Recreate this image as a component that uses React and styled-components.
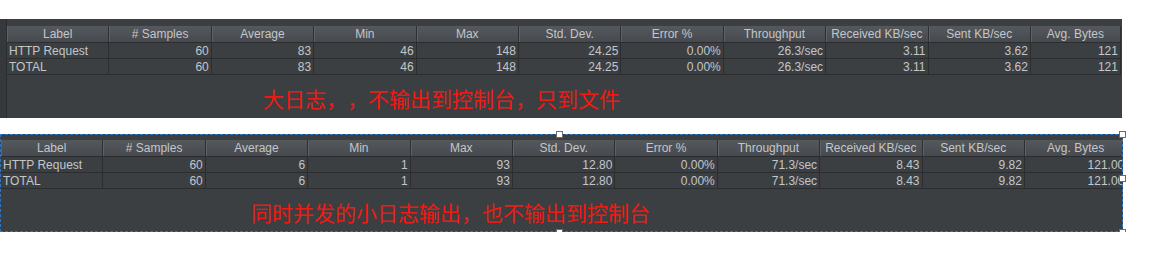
import styled, { createGlobalStyle } from 'styled-components';

const GlobalStyle = createGlobalStyle`
	body {
		margin: 0;
		background: #ffffff;
		font-family: 'Liberation Sans', Arial, sans-serif;
	}
`;

const columns = [
	'Label',
	'# Samples',
	'Average',
	'Min',
	'Max',
	'Std. Dev.',
	'Error %',
	'Throughput',
	'Received KB/sec',
	'Sent KB/sec',
	'Avg. Bytes'
];

const bigLogRows = [
	['HTTP Request', '60', '83', '46', '148', '24.25', '0.00%', '26.3/sec', '3.11', '3.62', '121'],
	['TOTAL', '60', '83', '46', '148', '24.25', '0.00%', '26.3/sec', '3.11', '3.62', '121']
];

const smallLogRows = [
	['HTTP Request', '60', '6', '1', '93', '12.80', '0.00%', '71.3/sec', '8.43', '9.82', '121.00'],
	['TOTAL', '60', '6', '1', '93', '12.80', '0.00%', '71.3/sec', '8.43', '9.82', '121.00']
];

const Page = styled.div`
	padding-top: 19px;
	display: flex;
	flex-direction: column;
	gap: 16px;
`;

const TopPanel = styled.div`
	width: 1122px;
	height: 99px;
	display: flex;
	background: #3c3f42;
	overflow: hidden;
`;

const SideStrip = styled.div`
	width: 6px;
	background: #36393c;
	border-right: 1px solid #2a2c2e;
	flex-shrink: 0;
`;

const PanelBody = styled.div`
	flex: 1;
	display: flex;
	flex-direction: column;
	padding-top: ${(p) => p.$top}px;
	overflow: hidden;
	min-width: 0;
`;

const Grid = styled.div`
	display: grid;
	grid-template-columns: repeat(10, 102.4px) ${(p) => p.$last}px;
	font-size: 12px;
	color: #c3c6ca;
`;

const HeadCell = styled.div`
	height: 17px;
	line-height: 17px;
	text-align: center;
	background: linear-gradient(#55585c, #46494d);
	border-right: 1px solid #2e3033;
	box-shadow: inset 1px 0 0 #5e6165;
	border-bottom: 1px solid #2b2d30;
	box-sizing: border-box;
	white-space: nowrap;
	overflow: hidden;
`;

const Cell = styled.div`
	height: 16px;
	line-height: 16px;
	padding: 0 2px;
	text-align: ${(p) => (p.$left ? 'left' : 'right')};
	background: #3c3f42;
	border-right: 1px solid #2b2d30;
	border-bottom: 1px solid #2b2d30;
	box-sizing: border-box;
	white-space: nowrap;
	overflow: hidden;
`;

const Note = styled.div`
	font-family: 'Noto Sans CJK SC', 'Microsoft YaHei', sans-serif;
	font-size: 21px;
	line-height: 24px;
	color: #f01a12;
	white-space: nowrap;
	text-spacing-trim: space-all;
	padding-left: ${(p) => p.$left}px;
	padding-top: ${(p) => p.$top}px;
`;

const SelectionBox = styled.div`
	position: relative;
	width: 1123px;
	height: 98px;
	border: 1px dashed #2a76c6;
	box-sizing: border-box;
	background: #3c3f42;
	display: flex;
`;

const Handle = styled.span`
	position: absolute;
	width: 5px;
	height: 5px;
	background: #ffffff;
	border: 1px solid #6b6b6b;
	left: ${(p) => p.$x}px;
	top: ${(p) => p.$y}px;
`;

const StatsTable = ({ rows, last }) => (
	<Grid $last={last}>
		{columns.map((c) => (
			<HeadCell key={c}>{c}</HeadCell>
		))}
		{rows.map((row) =>
			row.map((v, i) => (
				<Cell key={row[0] + i} $left={i === 0}>
					{v}
				</Cell>
			))
		)}
	</Grid>
);

const App = () => (
	<Page>
		<GlobalStyle />
		<TopPanel>
			<SideStrip />
			<PanelBody $top={7}>
				<StatsTable rows={bigLogRows} last={90} />
				<Note $left={256} $top={11}>
					大日志，，不输出到控制台，只到文件
				</Note>
			</PanelBody>
		</TopPanel>
		<SelectionBox>
			<PanelBody $top={5}>
				<StatsTable rows={smallLogRows} last={102.4} />
				<Note $left={250} $top={11}>
					同时并发的小日志输出，也不输出到控制台
				</Note>
			</PanelBody>
			<Handle $x={555} $y={-4} />
			<Handle $x={1118} $y={-4} />
			<Handle $x={1118} $y={40} />
			<Handle $x={1118} $y={94} />
			<Handle $x={555} $y={94} />
		</SelectionBox>
	</Page>
);

export default App;
